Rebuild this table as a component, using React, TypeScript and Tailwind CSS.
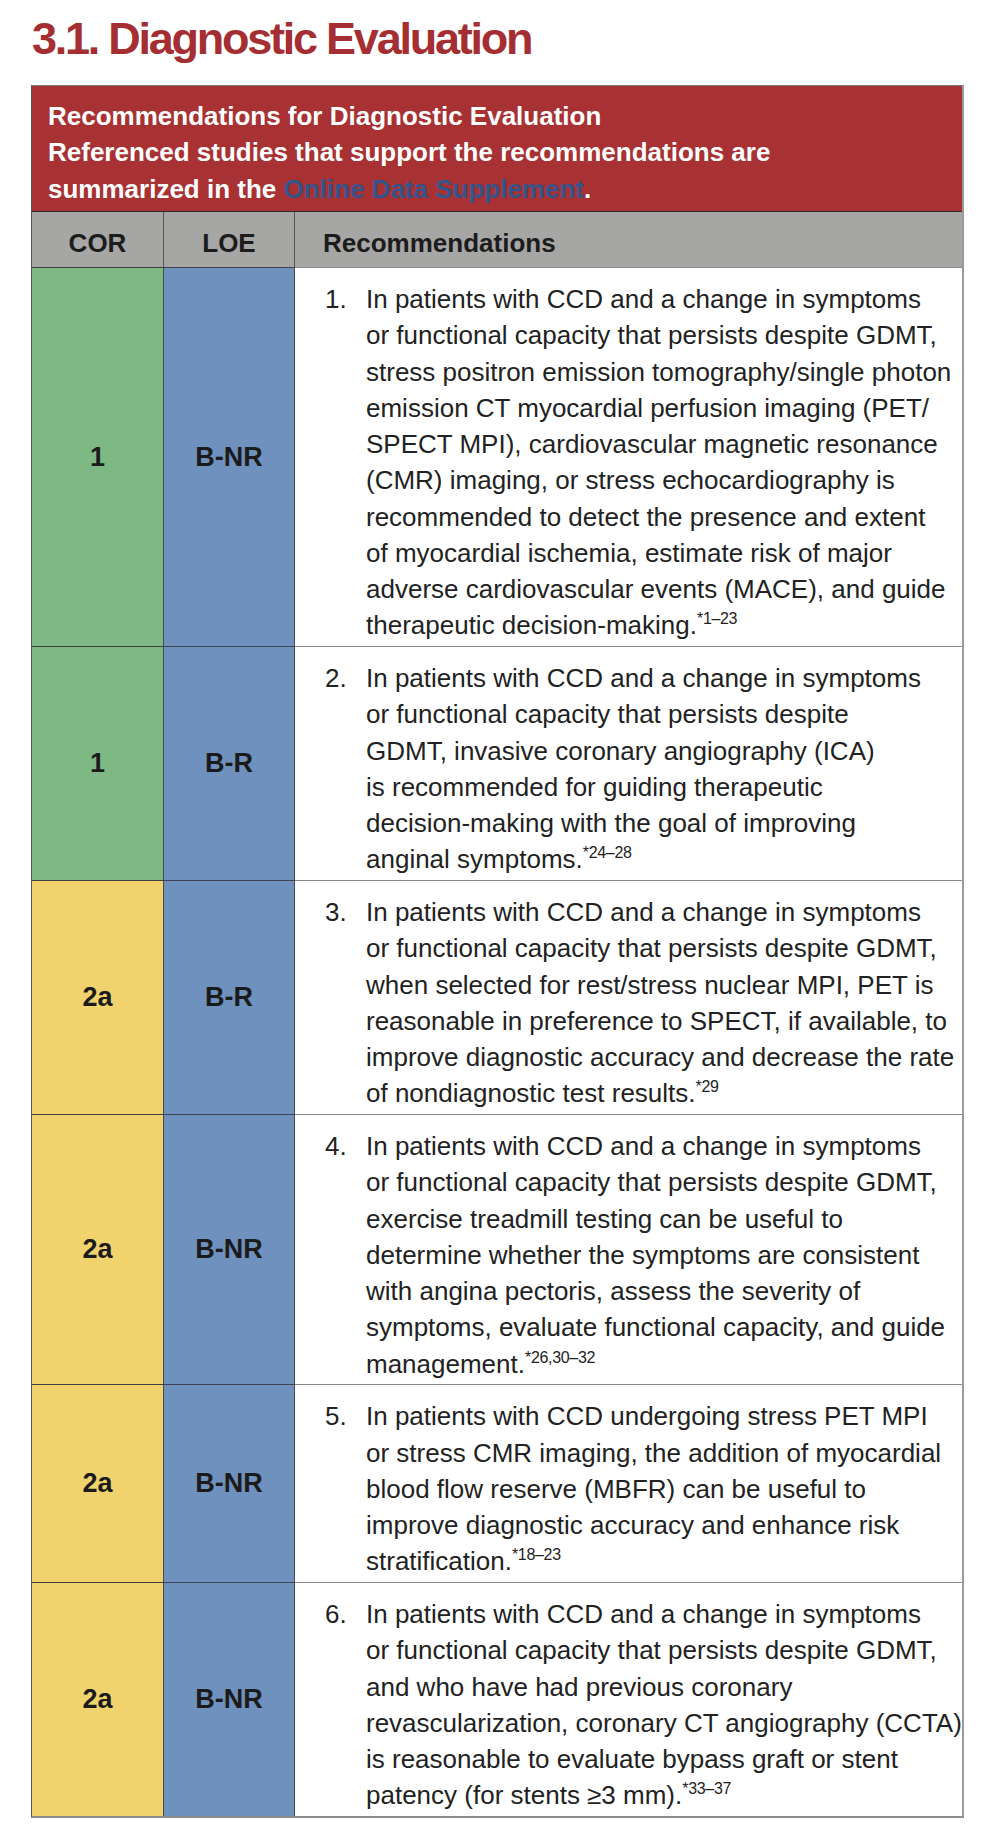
import React from "react";

type Row = {
  cor: string;
  corBg: string;
  loe: string;
  n: string;
  lines: string[];
  sup: string;
};

const GREEN = "bg-[#7eb884]";
const YELLOW = "bg-[#f1d36e]";

const rows: Row[] = [
  {
    cor: "1",
    corBg: GREEN,
    loe: "B-NR",
    n: "1.",
    lines: [
      "In patients with CCD and a change in symptoms",
      "or functional capacity that persists despite GDMT,",
      "stress positron emission tomography/single photon",
      "emission CT myocardial perfusion imaging (PET/",
      "SPECT MPI), cardiovascular magnetic resonance",
      "(CMR) imaging, or stress echocardiography is",
      "recommended to detect the presence and extent",
      "of myocardial ischemia, estimate risk of major",
      "adverse cardiovascular events (MACE), and guide",
      "therapeutic decision-making.",
    ],
    sup: "*1\u201323",
  },
  {
    cor: "1",
    corBg: GREEN,
    loe: "B-R",
    n: "2.",
    lines: [
      "In patients with CCD and a change in symptoms",
      "or functional capacity that persists despite",
      "GDMT, invasive coronary angiography (ICA)",
      "is recommended for guiding therapeutic",
      "decision-making with the goal of improving",
      "anginal symptoms.",
    ],
    sup: "*24\u201328",
  },
  {
    cor: "2a",
    corBg: YELLOW,
    loe: "B-R",
    n: "3.",
    lines: [
      "In patients with CCD and a change in symptoms",
      "or functional capacity that persists despite GDMT,",
      "when selected for rest/stress nuclear MPI, PET is",
      "reasonable in preference to SPECT, if available, to",
      "improve diagnostic accuracy and decrease the rate",
      "of nondiagnostic test results.",
    ],
    sup: "*29",
  },
  {
    cor: "2a",
    corBg: YELLOW,
    loe: "B-NR",
    n: "4.",
    lines: [
      "In patients with CCD and a change in symptoms",
      "or functional capacity that persists despite GDMT,",
      "exercise treadmill testing can be useful to",
      "determine whether the symptoms are consistent",
      "with angina pectoris, assess the severity of",
      "symptoms, evaluate functional capacity, and guide",
      "management.",
    ],
    sup: "*26,30\u201332",
  },
  {
    cor: "2a",
    corBg: YELLOW,
    loe: "B-NR",
    n: "5.",
    lines: [
      "In patients with CCD undergoing stress PET MPI",
      "or stress CMR imaging, the addition of myocardial",
      "blood flow reserve (MBFR) can be useful to",
      "improve diagnostic accuracy and enhance risk",
      "stratification.",
    ],
    sup: "*18\u201323",
  },
  {
    cor: "2a",
    corBg: YELLOW,
    loe: "B-NR",
    n: "6.",
    lines: [
      "In patients with CCD and a change in symptoms",
      "or functional capacity that persists despite GDMT,",
      "and who have had previous coronary",
      "revascularization, coronary CT angiography (CCTA)",
      "is reasonable to evaluate bypass graft or stent",
      "patency (for stents \u22653 mm).",
    ],
    sup: "*33\u201337",
  },
];

export default function App() {
  return (
    <div className="w-[990px] min-h-[1836px] bg-white font-['Liberation_Sans',Arial,sans-serif]">
      <h1 className="pt-[16px] pl-[32px] text-[45px] leading-[45px] font-bold tracking-[-0.05em] text-[#a52e32]">
        3.1. Diagnostic Evaluation
      </h1>

      <div className="mt-[24px] ml-[31px] w-[933px] border-t border-l border-t-[#777] border-l-[#555] border-r-2 border-r-[#9a9a9a] border-b-2 border-b-[#8c8c8c]">
        {/* red header */}
        <div className="bg-[#a83133] pl-[16px] pt-[11.5px] pb-[4px] text-[26px] font-bold leading-[36.5px] text-white border-b border-b-[#2e2e2e]">
          <div className="whitespace-nowrap">Recommendations for Diagnostic Evaluation</div>
          <div className="whitespace-nowrap">Referenced studies that support the recommendations are</div>
          <div className="whitespace-nowrap">
            summarized in the <span className="text-[#33558c]">Online Data Supplement</span>.
          </div>
        </div>

        {/* gray header */}
        <div className="grid grid-cols-[132px_131px_1fr] h-[55px] bg-[#a6a6a4] text-[26px] font-bold text-[#1c1c1c]">
          <div className="flex items-center justify-center pt-[8px] border-r border-r-[#555]">COR</div>
          <div className="flex items-center justify-center pt-[8px] border-r border-r-[#555]">LOE</div>
          <div className="flex items-center pl-[28px] pt-[8px]">Recommendations</div>
        </div>

        {rows.map((r, i) => (
          <div key={i} className="grid grid-cols-[132px_131px_1fr]">
            <div
              className={`${r.corBg} flex items-center justify-center border-t border-t-[#3f3f3f] border-r border-r-[#4a4a4a] text-[27px] font-bold text-[#1b1b1b]`}
            >
              {r.cor}
            </div>
            <div className="bg-[#6f91bd] flex items-center justify-center border-t border-t-[#3f4550] border-r border-r-[#3e4a5c] text-[27px] font-bold text-[#1b1b1b]">
              {r.loe}
            </div>
            <div className="flex border-t border-t-[#8a8a8a] pt-[13px] pb-[2.5px] pl-[30px] text-[26px] leading-[36.25px] text-[#222]">
              <span className="w-[41px] shrink-0">{r.n}</span>
              <div className="whitespace-nowrap">
                {r.lines.map((l, j) => (
                  <div key={j}>
                    {l}
                    {j === r.lines.length - 1 && (
                      <sup className="text-[16px] -top-[10px] tracking-[-0.02em]">{r.sup}</sup>
                    )}
                  </div>
                ))}
              </div>
            </div>
          </div>
        ))}
      </div>
    </div>
  );
}
